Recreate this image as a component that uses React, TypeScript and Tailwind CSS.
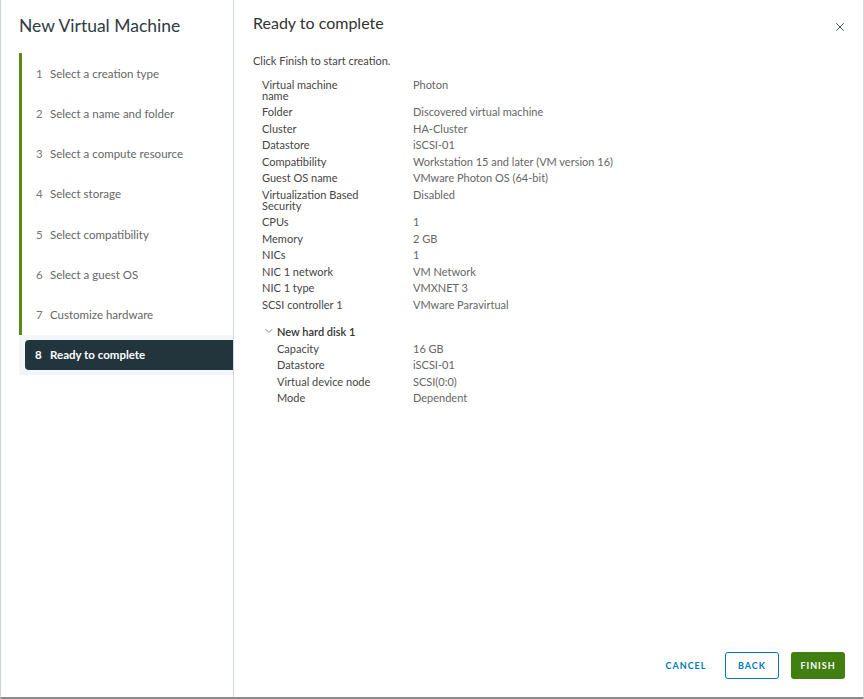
import { X, ChevronDown } from 'lucide-react'

const steps = [
  'Select a creation type',
  'Select a name and folder',
  'Select a compute resource',
  'Select storage',
  'Select compatibility',
  'Select a guest OS',
  'Customize hardware',
]

const summary: [string, string][] = [
  ['Virtual machine name', 'Photon'],
  ['Folder', 'Discovered virtual machine'],
  ['Cluster', 'HA-Cluster'],
  ['Datastore', 'iSCSI-01'],
  ['Compatibility', 'Workstation 15 and later (VM version 16)'],
  ['Guest OS name', 'VMware Photon OS (64-bit)'],
  ['Virtualization Based Security', 'Disabled'],
  ['CPUs', '1'],
  ['Memory', '2 GB'],
  ['NICs', '1'],
  ['NIC 1 network', 'VM Network'],
  ['NIC 1 type', 'VMXNET 3'],
  ['SCSI controller 1', 'VMware Paravirtual'],
]

const disk: [string, string][] = [
  ['Capacity', '16 GB'],
  ['Datastore', 'iSCSI-01'],
  ['Virtual device node', 'SCSI(0:0)'],
  ['Mode', 'Dependent'],
]

function Row({ label, value, indent }: { label: string; value: string; indent?: boolean }) {
  return (
    <div className="flex py-[2.75px] text-[11px] leading-[11px]">
      <div className={indent ? 'w-[136px] shrink-0' : 'w-[151px] shrink-0'}>
        <div className="max-w-[104px] text-[#454545]">{label}</div>
      </div>
      <div className="text-[#666666]">{value}</div>
    </div>
  )
}

export default function App() {
  return (
    <div
      className="flex h-[699px] w-[864px] overflow-hidden border-l border-r border-b-2 border-l-[#c9d4da] border-r-[#d4d9dc] border-b-[#8c8c8c] bg-white"
      style={{ fontFamily: 'Lato, "Noto Sans", sans-serif' }}
    >
      <aside className="flex w-[233px] shrink-0 flex-col border-r border-[#cfd8dc]">
        <h1 className="pl-[18px] pt-[14px] text-[17.5px] leading-[24px] text-[#2d3b42]">
          New Virtual Machine
        </h1>
        <nav className="ml-[18px] mt-[15px] flex flex-col">
          {steps.map((s, i) => (
            <div
              key={s}
              className="flex h-[40.3px] items-center border-l-[3px] border-[#5a8a16] pl-[14px] text-[11.5px] text-[#666666]"
            >
              <span className="w-[14px] text-[#777777]">{i + 1}</span>
              <span>{s}</span>
            </div>
          ))}
          <div className="flex h-[40px] items-stretch bg-[#f2f6f8] py-[5px] pl-[6px]">
            <div className="flex flex-1 items-center rounded-l-[4px] bg-[#22343c] pl-[10px] text-[11.5px] font-bold text-white">
              <span className="w-[15px]">8</span>
              <span>Ready to complete</span>
            </div>
          </div>
        </nav>
      </aside>

      <main className="flex flex-1 flex-col">
        <header className="flex items-start justify-between pl-[19px] pr-[16px] pt-[13px]">
          <h2 className="text-[16px] leading-[20px] text-[#333333]">Ready to complete</h2>
          <button className="mt-[7px] text-[#3b4a52]">
            <X size={14} strokeWidth={1.6} />
          </button>
        </header>

        <p className="mt-[19px] pl-[19px] text-[11px] leading-[16px] text-[#454545]">
          Click Finish to start creation.
        </p>

        <div className="ml-[28px] mt-[7px] flex flex-col">
          {summary.map(([l, v]) => (
            <Row key={l} label={l} value={v} />
          ))}

          <div className="mt-[10px] flex items-center py-[2.75px] text-[11px] leading-[11px] text-[#333333]">
            <ChevronDown size={12} strokeWidth={1.5} className="ml-[1px] mr-[2px] text-[#555555]" />
            <span className="font-semibold">New hard disk 1</span>
          </div>
          <div className="flex flex-col pl-[15px]">
            {disk.map(([l, v]) => (
              <Row key={l} label={l} value={v} indent />
            ))}
          </div>
        </div>

        <footer className="mt-auto flex justify-end gap-[12px] pb-[18px] pr-[18px]">
          <button className="h-[27px] w-[54px] text-[9px] font-bold tracking-[1px] text-[#0079b8]">
            CANCEL
          </button>
          <button className="h-[27px] w-[54px] rounded-[3px] border border-[#0079b8] text-[9px] font-bold tracking-[1px] text-[#0079b8]">
            BACK
          </button>
          <button className="h-[27px] w-[54px] rounded-[3px] bg-[#427f11] text-[9px] font-bold tracking-[1px] text-white">
            FINISH
          </button>
        </footer>
      </main>
    </div>
  )
}
